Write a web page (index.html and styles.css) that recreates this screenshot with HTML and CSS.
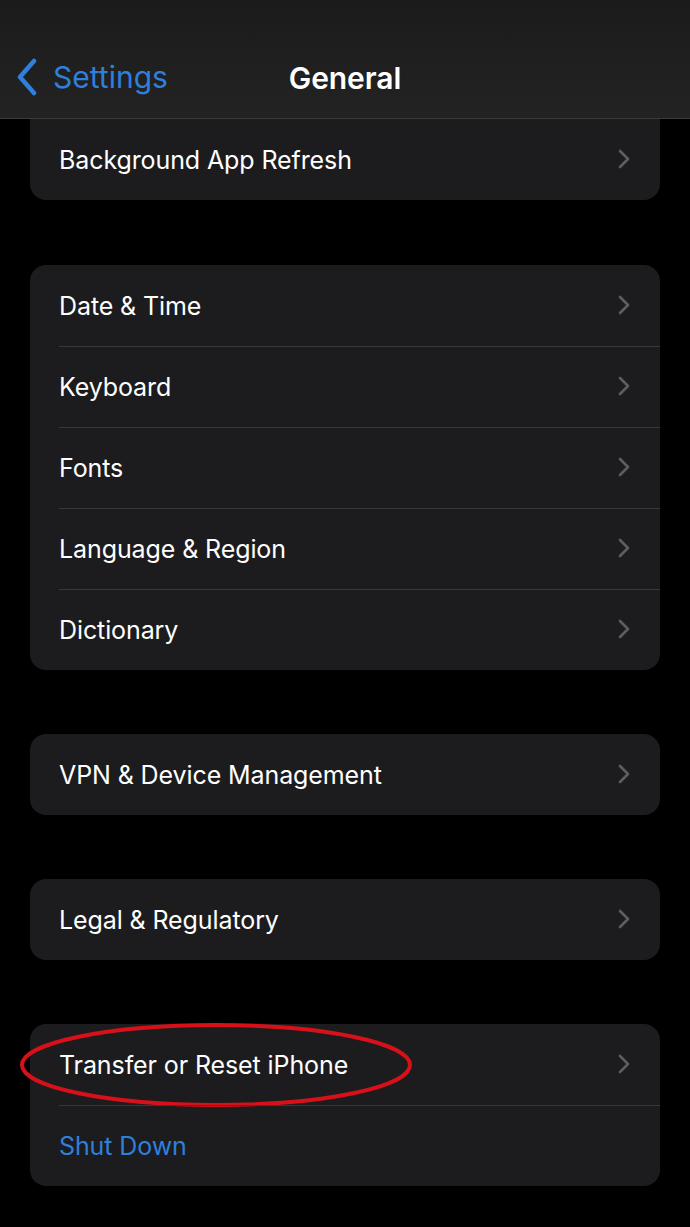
FILE: index.html
```html
<!DOCTYPE html>
<html lang="en">
<head>
    <meta charset="UTF-8">
    <meta name="viewport" content="width=device-width, initial-scale=1.0">
    <title>General</title>
    <link rel="stylesheet" href="styles.css">
</head>
<body>
    <header class="nav">
        <a class="back" href="#">
            <svg class="back-icon" width="24" height="38" viewBox="0 0 24 38">
                <path d="M19 3 L5 19 L19 35" fill="none" stroke="#2f7fdc" stroke-width="4.5" stroke-linecap="round" stroke-linejoin="round"/>
            </svg>
            <span>Settings</span>
        </a>
        <h1>General</h1>
    </header>

    <main class="list">
        <!-- partly scrolled under the nav bar -->
        <section class="group group-top">
            <div class="row"><span>Background App Refresh</span><svg class="chev" viewBox="0 0 14 20"><path d="M3 2 L11 10 L3 18"/></svg></div>
        </section>

        <section class="group">
            <div class="row"><span>Date &amp; Time</span><svg class="chev" viewBox="0 0 14 20"><path d="M3 2 L11 10 L3 18"/></svg></div>
            <div class="row"><span>Keyboard</span><svg class="chev" viewBox="0 0 14 20"><path d="M3 2 L11 10 L3 18"/></svg></div>
            <div class="row"><span>Fonts</span><svg class="chev" viewBox="0 0 14 20"><path d="M3 2 L11 10 L3 18"/></svg></div>
            <div class="row"><span>Language &amp; Region</span><svg class="chev" viewBox="0 0 14 20"><path d="M3 2 L11 10 L3 18"/></svg></div>
            <div class="row"><span>Dictionary</span><svg class="chev" viewBox="0 0 14 20"><path d="M3 2 L11 10 L3 18"/></svg></div>
        </section>

        <section class="group">
            <div class="row"><span>VPN &amp; Device Management</span><svg class="chev" viewBox="0 0 14 20"><path d="M3 2 L11 10 L3 18"/></svg></div>
        </section>

        <section class="group">
            <div class="row"><span>Legal &amp; Regulatory</span><svg class="chev" viewBox="0 0 14 20"><path d="M3 2 L11 10 L3 18"/></svg></div>
        </section>

        <section class="group group-last">
            <div class="row highlighted">
                <span>Transfer or Reset iPhone</span><svg class="chev" viewBox="0 0 14 20"><path d="M3 2 L11 10 L3 18"/></svg>
                <svg class="circle" width="400" height="90" viewBox="0 0 400 90">
                    <ellipse cx="200" cy="45" rx="194" ry="40" fill="none" stroke="#d8101a" stroke-width="4"/>
                </svg>
            </div>
            <div class="row action"><span>Shut Down</span></div>
        </section>
    </main>
</body>
</html>
```

FILE: styles.css
```css
body {
    margin: 0;
    background: #000;
    font-family: Inter, "Liberation Sans", sans-serif;
    color: #fff;
}

.nav {
    position: relative;
    height: 118px;
    background: linear-gradient(180deg, #1b1b1b 0%, #232323 100%);
    border-bottom: 1px solid #3b3b3b;
    display: flex;
    align-items: center;
    justify-content: center;
}

.back {
    position: absolute;
    left: 15px;
    top: 58px;
    display: flex;
    align-items: center;
    gap: 14px;
    color: #2f7fdc;
    text-decoration: none;
    font-size: 30px;
}

.back-icon {
    display: block;
}

.nav h1 {
    margin: 38px 0 0;
    font-size: 30px;
    font-weight: 600;
    letter-spacing: -0.1px;
}

.list {
    padding: 0 30px;
    display: flex;
    flex-direction: column;
    gap: 64px;
}

.group {
    background: #1c1c1e;
    border-radius: 16px;
}

.group-top {
    border-radius: 0 0 16px 16px;
    margin-bottom: 1px;
}

.row {
    position: relative;
    height: 81px;
    box-sizing: border-box;
    display: flex;
    align-items: center;
    justify-content: space-between;
    padding: 0 29px 0 30px;
    font-size: 25px;
    letter-spacing: -0.1px;
}

.row + .row {
    border-top: 1px solid #38383a;
    margin-left: 29px;
    padding-left: 1px;
}

.row span {
    margin-left: -1px;
}

.chev {
    width: 14px;
    height: 20px;
    margin-top: -2px;
    fill: none;
    stroke: #5e5e62;
    stroke-width: 2.6;
    stroke-linecap: round;
    stroke-linejoin: round;
}

.action span {
    color: #2f7fdc;
}

.circle {
    position: absolute;
    left: -14px;
    top: -4px;
    pointer-events: none;
}
```
